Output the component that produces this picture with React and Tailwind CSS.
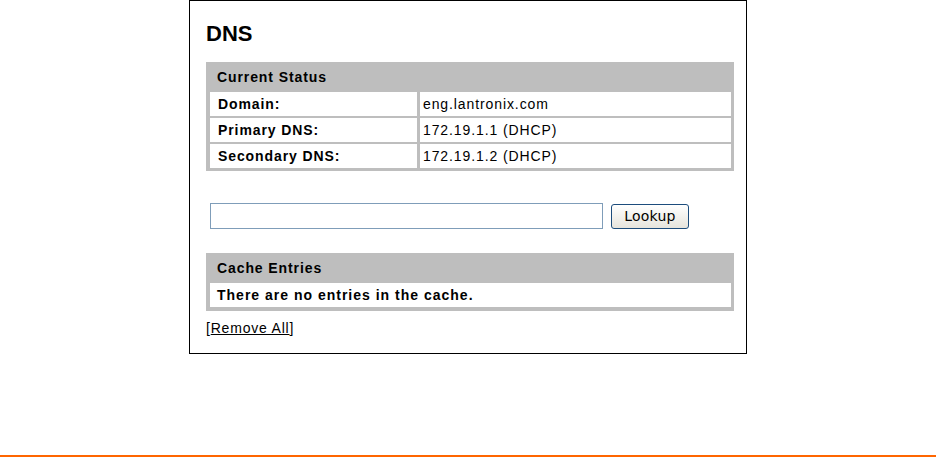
export default function App() {
  const rows = [
    ["Domain:", "eng.lantronix.com"],
    ["Primary DNS:", "172.19.1.1 (DHCP)"],
    ["Secondary DNS:", "172.19.1.2 (DHCP)"],
  ];
  return (
    <div className="w-[936px] h-[458px] bg-white overflow-hidden font-['Liberation_Sans',Arial,sans-serif] text-black">
      <div className="ml-[189px] w-[558px] h-[354px] border border-black pl-[16px] pt-[19px]">
        <h1 className="text-[22px] leading-[26px] font-bold mt-[1px] mb-[15px]">DNS</h1>
        <div className="w-[528px] bg-[#bebebe] pl-[4px] pr-[3px] pt-[3px] pb-[3px] flex flex-col gap-[2px]">
          <div className="h-[25px] flex items-center pl-[7px] text-[14px] tracking-[0.9px] font-bold">Current Status</div>
          {rows.map(([k, v]) => (
            <div key={k} className="flex gap-[3px] h-[24px]">
              <div className="w-[207px] bg-white flex items-center pl-[8px] text-[14px] tracking-[0.9px] font-bold">{k}</div>
              <div className="flex-1 bg-white flex items-center pl-[3px] text-[14px] tracking-[0.9px]">{v}</div>
            </div>
          ))}
        </div>
        <div className="flex items-center mt-[32px] ml-[4px] gap-[8px]">
          <input type="text" className="w-[393px] h-[26px] border border-[#7f9db9] bg-white outline-none" />
          <button className="w-[78px] h-[25px] rounded-[3px] border border-[#1c4c7c] bg-gradient-to-b from-white to-[#e6e4dc] text-[14px] tracking-[0.2px] font-['DejaVu_Sans',Verdana,sans-serif] text-black leading-none">
            Lookup
          </button>
        </div>
        <div className="w-[528px] mt-[24px] bg-[#bebebe] pl-[4px] pr-[3px] pt-[3px] pb-[4px] flex flex-col gap-[2px]">
          <div className="h-[25px] flex items-center pl-[7px] text-[14px] tracking-[0.9px] font-bold">Cache Entries</div>
          <div className="h-[24px] bg-white flex items-center pl-[7px] text-[14px] tracking-[1px] font-bold">There are no entries in the cache.</div>
        </div>
        <div className="mt-[9px] text-[14px] tracking-[0.8px] leading-[16px]">
          [<span className="underline">Remove All</span>]
        </div>
      </div>
      <div className="mt-[101px] h-[2px] w-full bg-[#ff6600]" />
    </div>
  );
}
